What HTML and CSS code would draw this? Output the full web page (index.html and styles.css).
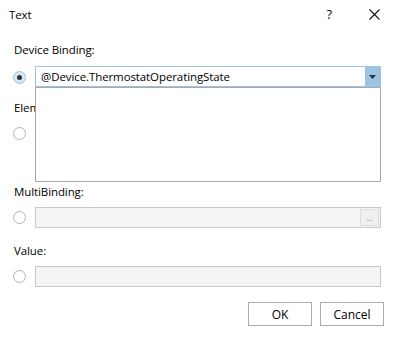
FILE: index.html
```html
<!DOCTYPE html>
<html>
<head>
<meta charset="utf-8">
<title>Text</title>
<link rel="stylesheet" href="styles.css">
</head>
<body>
<div class="titlebar">
	<span class="title">Text</span>
	<span class="help">?</span>
	<span class="close">
		<svg width="11" height="11" viewBox="0 0 11 11"><path d="M0.5 0.5 L10.5 10.5 M10.5 0.5 L0.5 10.5" stroke="#111" stroke-width="1.1" fill="none"/></svg>
	</span>
</div>

<div class="form">
	<div class="label first">Device Binding:</div>
	<div class="row">
		<span class="radio checked"></span>
		<div class="combo">
			<span class="combo-text">@Device.ThermostatOperatingState</span>
			<span class="combo-btn">
				<svg width="7" height="4" viewBox="0 0 7 4"><path d="M0 0 H7 L3.5 4 Z" fill="#333"/></svg>
			</span>
			<div class="popup"></div>
		</div>
	</div>

	<div class="label second">Element Binding:</div>
	<div class="row">
		<span class="radio"></span>
		<div class="field"></div>
	</div>

	<div class="label third">MultiBinding:</div>
	<div class="row">
		<span class="radio"></span>
		<div class="field">
			<span class="dots">...</span>
		</div>
	</div>

	<div class="label fourth">Value:</div>
	<div class="row">
		<span class="radio"></span>
		<div class="field"></div>
	</div>

	<div class="buttons">
		<button class="btn">OK</button>
		<button class="btn">Cancel</button>
	</div>
</div>
</body>
</html>
```
FILE: styles.css
```css
body{
	margin: 0;
	background-color: white;
	font-family: "Open Sans", "Noto Sans", sans-serif;
	font-size: 11.5px;
	letter-spacing: -0.1px;
	color: #000;
}

.titlebar{
	height: 28px;
	display: flex;
	align-items: center;
	padding: 0 15px 0 9px;
}
.title{
	flex: 1;
}
.help{
	font-size: 13px;
	margin-right: 37px;
	color: #111;
}
.close{
	display: flex;
	align-items: center;
}

.form{
	padding: 0 14px;
}
.label{
	line-height: 16px;
	height: 16px;
}
.first{ margin-top: 14px; }
.second{ margin-top: 12px; }
.third{ margin-top: 40px; }
.fourth{ margin-top: 15px; }

.row{
	display: flex;
	align-items: center;
	gap: 9px;
	margin-top: 7px;
}
.first + .row{ margin-top: 8px; }

.radio{
	width: 11px;
	height: 11px;
	border: 1px solid #b4b4b4;
	border-radius: 50%;
	background: white;
	flex: none;
	box-sizing: content-box;
	position: relative;
	margin-left: -1px;
}
.radio.checked{
	border-color: #9cc2e4;
	background: #d6e8f7;
}
.radio.checked::after{
	content: "";
	position: absolute;
	left: 3px;
	top: 3px;
	width: 5px;
	height: 5px;
	border-radius: 50%;
	background: #333;
}

.combo{
	flex: 1;
	height: 22px;
	border: 1px solid #9cc3e4;
	border-bottom-width: 2px;
	display: flex;
	align-items: center;
	position: relative;
	box-sizing: border-box;
	background: white;
}
.combo-text{
	flex: 1;
	padding-left: 5px;
	white-space: nowrap;
}
.combo-btn{
	width: 15px;
	height: 100%;
	background: #9cc3e4;
	display: flex;
	align-items: center;
	justify-content: center;
}
.popup{
	position: absolute;
	top: 20px;
	left: -1px;
	right: -1px;
	height: 95px;
	border: 1px solid #a8a8a8;
	background: white;
	box-sizing: border-box;
	z-index: 2;
}

.field{
	flex: 1;
	height: 21px;
	border: 1px solid #c9c9c9;
	background: #f4f4f4;
	box-sizing: border-box;
	display: flex;
	justify-content: flex-end;
	align-items: center;
	padding-right: 1px;
}
.dots{
	width: 19px;
	height: 17px;
	border: 1px solid #dedede;
	background: #f0f0f0;
	font-size: 8px;
	line-height: 15px;
	text-align: center;
	color: #777;
	box-sizing: border-box;
}

.buttons{
	display: flex;
	justify-content: flex-end;
	gap: 8px;
	margin-top: 15px;
	margin-right: -3px;
}
.btn{
	width: 64px;
	height: 24px;
	border: 1px solid #adadad;
	background: white;
	font-family: "Open Sans", "Noto Sans", sans-serif;
	font-size: 12px;
	color: #000;
	padding: 0;
}
```
